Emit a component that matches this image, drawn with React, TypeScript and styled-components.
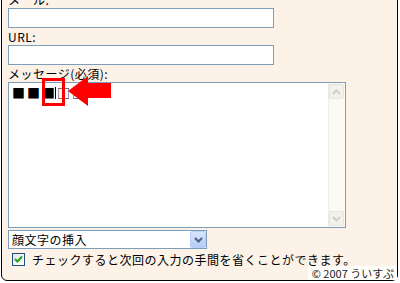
import React from 'react';
import styled, { createGlobalStyle } from 'styled-components';

const GlobalStyle = createGlobalStyle`
  html, body {
    margin: 0;
    padding: 0;
    background: #ffffff;
    overflow: hidden;
  }
  body {
    font-family: 'Noto Sans CJK JP', 'Noto Sans', sans-serif;
    font-size: 12px;
    letter-spacing: 0.5px;
    color: #000;
  }
`;

const colors = {
  panel: '#fdf2e8',
  field: '#7f9db9',
  red: '#ff0000',
};

const Panel = styled.div`
  box-sizing: border-box;
  width: 397px;
  margin: -12px 0 0 1px;
  padding: 2px 0 0 6px;
  background: ${colors.panel};
  border: 1px solid #000;
  border-radius: 6px;
  display: flex;
  flex-direction: column;
`;

const Label = styled.div`
  height: 17px;
  line-height: 17px;
  white-space: nowrap;
`;

const TextInput = styled.div`
  box-sizing: border-box;
  width: 266px;
  height: 20px;
  background: #fff;
  border: 1px solid ${colors.field};
`;

const MessageBox = styled.div`
  position: relative;
  box-sizing: border-box;
  width: 338px;
  height: 146px;
  background: #fff;
  border: 1px solid ${colors.field};
  display: flex;
`;

const MessageText = styled.div`
  flex: 1;
  padding: 1px 0 0 3px;
  font-size: 13px;
  line-height: 18px;
  letter-spacing: 2px;
  white-space: nowrap;
`;

const Caret = styled.span`
  display: inline-block;
  width: 1px;
  height: 12px;
  background: #000;
  margin: 0 1px 0 -2px;
  vertical-align: -1px;
`;

const Scrollbar = styled.div`
  width: 16px;
  display: flex;
  flex-direction: column;
  justify-content: space-between;
  background: #fbfbf4;
  border-left: 1px solid #eeede5;
`;

const ScrollButton = styled.div`
  box-sizing: border-box;
  width: 15px;
  height: 15px;
  margin: 1px 0;
  background: #f2f1ea;
  border: 1px solid #e6e5dc;
  border-radius: 2px;
  display: flex;
  align-items: center;
  justify-content: center;
`;

const Highlight = styled.div`
  position: absolute;
  left: 33px;
  top: -5px;
  width: 23px;
  height: 28px;
  box-sizing: border-box;
  border: 3px solid ${colors.red};
`;

const Arrow = styled.svg`
  position: absolute;
  left: 58px;
  top: -8px;
`;

const Select = styled.div`
  box-sizing: border-box;
  width: 199px;
  height: 19px;
  margin-top: 2px;
  background: #fff;
  border: 1px solid ${colors.field};
  display: flex;
  align-items: center;
  justify-content: space-between;
  padding-left: 3px;
  line-height: 17px;
`;

const DropButton = styled.div`
  box-sizing: border-box;
  width: 16px;
  height: 17px;
  background: linear-gradient(#d7e4fd, #b6cbf8);
  border: 1px solid #b9cdf7;
  border-radius: 2px;
  display: flex;
  align-items: center;
  justify-content: center;
`;

const CheckRow = styled.div`
  display: flex;
  align-items: center;
  gap: 7px;
  height: 16px;
  margin-top: 2px;
  padding-left: 4px;
  white-space: nowrap;
`;

const CheckBox = styled.span`
  box-sizing: border-box;
  width: 13px;
  height: 13px;
  border: 1px solid #1c5180;
  background: linear-gradient(135deg, #e6e6e0, #ffffff);
  display: flex;
  align-items: center;
  justify-content: center;
`;

const Footer = styled.div`
  display: flex;
  justify-content: flex-end;
  margin-top: -1px;
`;

const Copyright = styled.span`
  background: #fffefb;
  font-size: 11px;
  letter-spacing: 0;
  line-height: 14px;
  height: 14px;
  padding: 0 3px 0 4px;
  color: #222;
  white-space: nowrap;
`;

const Chevron = ({ up, color }: { up?: boolean; color: string }) => (
  <svg width="9" height="6" viewBox="0 0 9 6">
    <path
      d={up ? 'M1 5 L4.5 1.5 L8 5' : 'M1 1 L4.5 4.5 L8 1'}
      fill="none"
      stroke={color}
      strokeWidth="2"
    />
  </svg>
);

export default function App() {
  return (
    <>
      <GlobalStyle />
      <Panel>
        <Label>メール:</Label>
        <TextInput />
        <Label>URL:</Label>
        <TextInput />
        <Label>メッセージ(必須):</Label>
        <MessageBox>
          <MessageText>
            ■■■<Caret />□□
          </MessageText>
          <Scrollbar>
            <ScrollButton>
              <Chevron up color="#cfcfc6" />
            </ScrollButton>
            <ScrollButton>
              <Chevron color="#cfcfc6" />
            </ScrollButton>
          </Scrollbar>
          <Highlight />
          <Arrow width="45" height="32" viewBox="0 0 45 32">
            <polygon points="1,16 21,1 21,8 44,8 44,23 21,23 21,31" fill={colors.red} />
          </Arrow>
        </MessageBox>
        <Select>
          <span>顔文字の挿入</span>
          <DropButton>
            <Chevron color="#4d6185" />
          </DropButton>
        </Select>
        <CheckRow>
          <CheckBox>
            <svg width="9" height="9" viewBox="0 0 9 9">
              <path d="M1 4 L3.5 6.5 L8 1.5" fill="none" stroke="#21a121" strokeWidth="2" />
            </svg>
          </CheckBox>
          <span>チェックすると次回の入力の手間を省くことができます。</span>
        </CheckRow>
        <Footer>
          <Copyright>© 2007 ういすぷ</Copyright>
        </Footer>
      </Panel>
    </>
  );
}
